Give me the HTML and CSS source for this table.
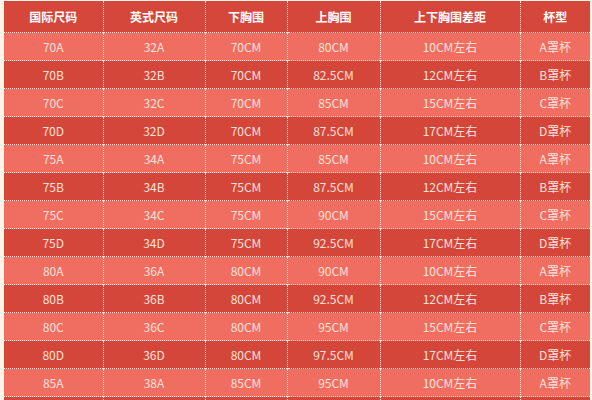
FILE: index.html
```html
<!DOCTYPE html>
<html lang="zh">
<head>
<meta charset="utf-8">
<link rel="stylesheet" href="styles.css">
</head>
<body>
<table class="size-table">
  <colgroup>
    <col class="c1"><col class="c2"><col class="c3"><col class="c4"><col class="c5"><col class="c6">
  </colgroup>
  <thead>
    <tr><th>国际尺码</th><th>英式尺码</th><th>下胸围</th><th>上胸围</th><th>上下胸围差距</th><th>杯型</th></tr>
  </thead>
  <tbody>
    <tr class="light"><td>70A</td><td>32A</td><td>70CM</td><td>80CM</td><td>10CM左右</td><td>A罩杯</td></tr>
    <tr class="dark"><td>70B</td><td>32B</td><td>70CM</td><td>82.5CM</td><td>12CM左右</td><td>B罩杯</td></tr>
    <tr class="light"><td>70C</td><td>32C</td><td>70CM</td><td>85CM</td><td>15CM左右</td><td>C罩杯</td></tr>
    <tr class="dark"><td>70D</td><td>32D</td><td>70CM</td><td>87.5CM</td><td>17CM左右</td><td>D罩杯</td></tr>
    <tr class="light"><td>75A</td><td>34A</td><td>75CM</td><td>85CM</td><td>10CM左右</td><td>A罩杯</td></tr>
    <tr class="dark"><td>75B</td><td>34B</td><td>75CM</td><td>87.5CM</td><td>12CM左右</td><td>B罩杯</td></tr>
    <tr class="light"><td>75C</td><td>34C</td><td>75CM</td><td>90CM</td><td>15CM左右</td><td>C罩杯</td></tr>
    <tr class="dark"><td>75D</td><td>34D</td><td>75CM</td><td>92.5CM</td><td>17CM左右</td><td>D罩杯</td></tr>
    <tr class="light"><td>80A</td><td>36A</td><td>80CM</td><td>90CM</td><td>10CM左右</td><td>A罩杯</td></tr>
    <tr class="dark"><td>80B</td><td>36B</td><td>80CM</td><td>92.5CM</td><td>12CM左右</td><td>B罩杯</td></tr>
    <tr class="light"><td>80C</td><td>36C</td><td>80CM</td><td>95CM</td><td>15CM左右</td><td>C罩杯</td></tr>
    <tr class="dark"><td>80D</td><td>36D</td><td>80CM</td><td>97.5CM</td><td>17CM左右</td><td>D罩杯</td></tr>
    <tr class="light"><td>85A</td><td>38A</td><td>85CM</td><td>95CM</td><td>10CM左右</td><td>A罩杯</td></tr>
    <tr class="dark"><td></td><td></td><td></td><td></td><td></td><td></td></tr>
  </tbody>
</table>
</body>
</html>
```
FILE: styles.css
```css
html, body {
  margin: 0;
  padding: 0;
  background: #fdf5e8;
  overflow: hidden;
}

body {
  padding: 1px 2px 0 4px;
  font-family: "Noto Sans CJK SC", "Noto Sans", sans-serif;
}

.size-table {
  width: 586px;
  border-collapse: collapse;
  table-layout: fixed;
  font-size: 12px;
}

.c1 { width: 99px; }
.c2 { width: 102px; }
.c3 { width: 82px; }
.c4 { width: 93px; }
.c5 { width: 140px; }
.c6 { width: 70px; }

.size-table th,
.size-table td {
  padding: 0;
  text-align: center;
  vertical-align: middle;
  border: 0;
}

.size-table th + th,
.size-table td + td {
  border-left: 1px dotted #fde9de;
}

.size-table th {
  height: 31px;
  background: #d4473a;
  color: #ffffff;
  font-weight: bold;
  font-size: 12px;
}

.size-table td {
  height: 27px;
  border-top: 1px dotted #fde9de;
  color: #fde1d8;
}

.light td {
  background: #ef6e61;
}

.dark td {
  background: #d5463a;
}
```
